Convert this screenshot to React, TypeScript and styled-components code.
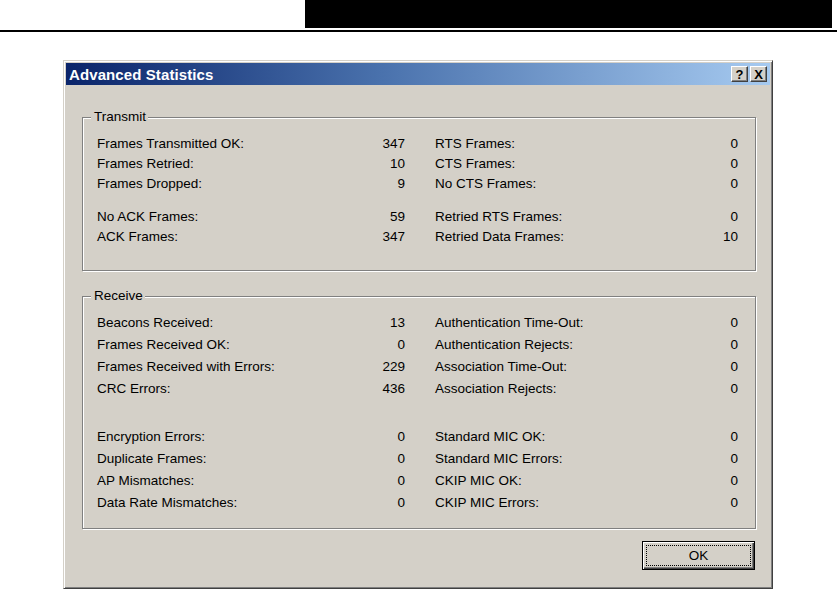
import React from 'react';
import styled, { createGlobalStyle } from 'styled-components';

const GlobalStyle = createGlobalStyle`
  html, body {
    margin: 0;
    padding: 0;
    background: #ffffff;
  }
  body {
    font-family: "Liberation Sans", Arial, sans-serif;
  }
`;

const Page = styled.div`
  width: 837px;
  height: 590px;
  overflow: hidden;
`;

const Header = styled.div`
  height: 28px;
  padding: 0 5px 2px 305px;
  border-bottom: 2px solid #000;
`;

const HeaderBar = styled.div`
  height: 100%;
  background: #000;
`;

const Window = styled.div`
  margin: 28px 0 0 63px;
  width: 710px;
  height: 529px;
  box-sizing: border-box;
  background: #d4d0c8;
  border: 1px solid;
  border-color: #d4d0c8 #404040 #404040 #d4d0c8;
  box-shadow: inset 1px 1px 0 #ffffff, inset -1px -1px 0 #808080;
  padding: 2px;
  display: flex;
  flex-direction: column;
`;

const TitleBar = styled.div`
  height: 22px;
  display: flex;
  align-items: center;
  justify-content: space-between;
  padding: 0 3px 0 3px;
  background: linear-gradient(to right, #0a246a 0%, #4a72ad 45%, #a6caf0 100%);
`;

const Title = styled.span`
  color: #ffffff;
  font-weight: bold;
  font-size: 15px;
  letter-spacing: 0.1px;
`;

const Controls = styled.div`
  display: flex;
  gap: 2px;
`;

const CaptionButton = styled.button`
  width: 17px;
  height: 16px;
  padding: 0;
  margin: 0;
  box-sizing: border-box;
  background: #d4d0c8;
  border: 1px solid;
  border-color: #ffffff #404040 #404040 #ffffff;
  box-shadow: inset -1px -1px 0 #808080;
  font-family: "Liberation Sans", Arial, sans-serif;
  font-weight: bold;
  font-size: 13px;
  line-height: 13px;
  color: #000;
  display: flex;
  align-items: center;
  justify-content: center;
`;

const Body = styled.div`
  flex: 1;
  display: flex;
  flex-direction: column;
  padding: 24px 14px 15px 16px;
`;

const Group = styled.fieldset<{ $top: number; $bottom: number }>`
  margin: 0;
  min-width: 0;
  padding: ${(p) => p.$top}px 17px ${(p) => p.$bottom}px 14px;
  border: 1px solid #808080;
  box-shadow: inset 1px 1px 0 #ffffff, 1px 1px 0 #ffffff;
  & + & {
    margin-top: 17px;
  }
`;

const Legend = styled.legend`
  margin-left: -6px;
  padding: 0 2px 0 3px;
  font-size: 13.5px;
  line-height: 16px;
  color: #000;
  background: #d4d0c8;
`;

const Row = styled.div<{ $h: number }>`
  display: grid;
  grid-template-columns: 308px 303px;
  column-gap: 30px;
  height: ${(p) => p.$h}px;
  align-items: center;
`;

const Spacer = styled.div<{ $h: number }>`
  height: ${(p) => p.$h}px;
`;

const Stat = styled.div`
  display: flex;
  justify-content: space-between;
  font-size: 13.5px;
  color: #000;
`;

const Footer = styled.div`
  display: flex;
  justify-content: flex-end;
  margin-top: 12px;
  padding-right: 1px;
`;

const OkButton = styled.button`
  width: 113px;
  height: 29px;
  padding: 3px;
  box-sizing: border-box;
  background: #d4d0c8;
  border: 1px solid #000;
  box-shadow: inset 1px 1px 0 #ffffff, inset -1px -1px 0 #404040, inset -2px -2px 0 #808080;
  font-family: "Liberation Sans", Arial, sans-serif;
  font-size: 13.5px;
  color: #000;
  display: flex;
`;

const FocusRing = styled.span`
  flex: 1;
  border: 1px dotted #000;
  display: flex;
  align-items: center;
  justify-content: center;
`;

type Pair = [string, string, string, string];

const transmit: Pair[][] = [
  [
    ['Frames Transmitted OK:', '347', 'RTS Frames:', '0'],
    ['Frames Retried:', '10', 'CTS Frames:', '0'],
    ['Frames Dropped:', '9', 'No CTS Frames:', '0'],
  ],
  [
    ['No ACK Frames:', '59', 'Retried RTS Frames:', '0'],
    ['ACK Frames:', '347', 'Retried Data Frames:', '10'],
  ],
];

const receive: Pair[][] = [
  [
    ['Beacons Received:', '13', 'Authentication Time-Out:', '0'],
    ['Frames Received OK:', '0', 'Authentication Rejects:', '0'],
    ['Frames Received with Errors:', '229', 'Association Time-Out:', '0'],
    ['CRC Errors:', '436', 'Association Rejects:', '0'],
  ],
  [
    ['Encryption Errors:', '0', 'Standard MIC OK:', '0'],
    ['Duplicate Frames:', '0', 'Standard MIC Errors:', '0'],
    ['AP Mismatches:', '0', 'CKIP MIC OK:', '0'],
    ['Data Rate Mismatches:', '0', 'CKIP MIC Errors:', '0'],
  ],
];

const StatBlock: React.FC<{ sections: Pair[][]; rowH: number; gap: number }> = ({
  sections,
  rowH,
  gap,
}) => (
  <>
    {sections.map((rows, i) => (
      <React.Fragment key={i}>
        {i > 0 && <Spacer $h={gap} />}
        {rows.map(([l1, v1, l2, v2]) => (
          <Row key={l1} $h={rowH}>
            <Stat>
              <span>{l1}</span>
              <span>{v1}</span>
            </Stat>
            <Stat>
              <span>{l2}</span>
              <span>{v2}</span>
            </Stat>
          </Row>
        ))}
      </React.Fragment>
    ))}
  </>
);

export default function App() {
  return (
    <Page>
      <GlobalStyle />
      <Header>
        <HeaderBar />
      </Header>
      <Window>
        <TitleBar>
          <Title>Advanced Statistics</Title>
          <Controls>
            <CaptionButton>?</CaptionButton>
            <CaptionButton>X</CaptionButton>
          </Controls>
        </TitleBar>
        <Body>
          <Group $top={8} $bottom={24}>
            <Legend>Transmit</Legend>
            <StatBlock sections={transmit} rowH={20} gap={13} />
          </Group>
          <Group $top={7} $bottom={15}>
            <Legend>Receive</Legend>
            <StatBlock sections={receive} rowH={22} gap={26} />
          </Group>
          <Footer>
            <OkButton>
              <FocusRing>OK</FocusRing>
            </OkButton>
          </Footer>
        </Body>
      </Window>
    </Page>
  );
}
